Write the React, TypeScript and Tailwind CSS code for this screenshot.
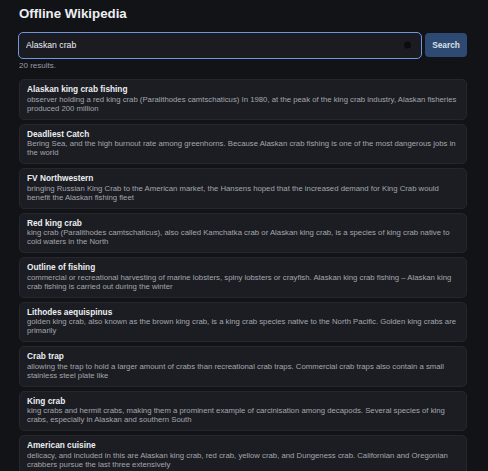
import { useEffect, useRef } from 'react'

type Result = {
    title: string
    snippet: string
}

const results: Result[] = [
    {
        title: 'Alaskan king crab fishing',
        snippet:
            'observer holding a red king crab (Paralithodes camtschaticus) In 1980, at the peak of the king crab industry, Alaskan fisheries produced 200 million',
    },
    {
        title: 'Deadliest Catch',
        snippet:
            'Bering Sea, and the high burnout rate among greenhorns. Because Alaskan crab fishing is one of the most dangerous jobs in the world',
    },
    {
        title: 'FV Northwestern',
        snippet:
            'bringing Russian King Crab to the American market, the Hansens hoped that the increased demand for King Crab would benefit the Alaskan fishing fleet',
    },
    {
        title: 'Red king crab',
        snippet:
            'king crab (Paralithodes camtschaticus), also called Kamchatka crab or Alaskan king crab, is a species of king crab native to cold waters in the North',
    },
    {
        title: 'Outline of fishing',
        snippet:
            'commercial or recreational harvesting of marine lobsters, spiny lobsters or crayfish. Alaskan king crab fishing – Alaskan king crab fishing is carried out during the winter',
    },
    {
        title: 'Lithodes aequispinus',
        snippet:
            'golden king crab, also known as the brown king crab, is a king crab species native to the North Pacific. Golden king crabs are primarily',
    },
    {
        title: 'Crab trap',
        snippet:
            'allowing the trap to hold a larger amount of crabs than recreational crab traps. Commercial crab traps also contain a small stainless steel plate like',
    },
    {
        title: 'King crab',
        snippet:
            'king crabs and hermit crabs, making them a prominent example of carcinisation among decapods. Several species of king crabs, especially in Alaskan and southern South',
    },
    {
        title: 'American cuisine',
        snippet:
            'delicacy, and included in this are Alaskan king crab, red crab, yellow crab, and Dungeness crab. Californian and Oregonian crabbers pursue the last three extensively',
    },
    {
        title: 'Chionoecetes opilio',
        snippet:
            'snow crab, a species of crab found in the North Atlantic and North Pacific, fished commercially alongside king crab in the Bering Sea',
    },
]

export default function App() {
    const inputRef = useRef<HTMLInputElement>(null)

    useEffect(() => {
        const el = inputRef.current
        if (!el) return
        el.focus()
        el.setSelectionRange(el.value.length, el.value.length)
    }, [])

    return (
        <div className="h-screen overflow-hidden bg-[#121317] pl-[19px] pr-[21px] pt-[6px] font-['Liberation_Sans',Arial,sans-serif] text-[#eceef1]">
            <h1 className="text-[13.3px] leading-[16px] font-bold">
                Offline Wikipedia
            </h1>

            <form
                className="mt-[9px] flex items-center gap-[3px]"
                onSubmit={(e) => e.preventDefault()}
            >
                <div className="relative flex-1 -ml-px">
                    <input
                        ref={inputRef}
                        type="text"
                        defaultValue="Alaskan crab"
                        className="h-[27px] w-full rounded-[5px] border-[1.5px] border-[#7096df] bg-[#1a1c22] pl-[7px] pr-6 text-[8.7px] text-[#eef0f3] caret-[#eef0f3] outline-none"
                    />
                    <span className="absolute right-[11px] top-1/2 h-[7px] w-[7px] -translate-y-1/2 rounded-full bg-[#0b0c0f]" />
                </div>
                <button
                    type="submit"
                    className="h-[23.5px] w-[42px] rounded-[4px] bg-[#2e4a72] text-[8.3px] font-bold text-[#d9e0ea]"
                >
                    Search
                </button>
            </form>

            <p className="mt-[2px] text-[8px] leading-[10px] text-[#9a9ca3]">
                {results.length * 2} results.
            </p>

            <div className="mt-[8.5px] flex flex-col gap-[4px] pb-4">
                {results.map((r, i) => (
                    <div
                        key={i}
                        className="rounded-[5px] border border-[#25272d] bg-[#1b1d22] pl-[7px] pr-[4px] pt-[5px] pb-[5.5px]"
                    >
                        <p className="text-[8.3px] leading-[9.5px] font-bold text-[#eceef1]">
                            {r.title}
                        </p>
                        <p className="text-[7.75px] leading-[9.25px] text-[#a3a6ad]">
                            {r.snippet}
                        </p>
                    </div>
                ))}
            </div>
        </div>
    )
}
